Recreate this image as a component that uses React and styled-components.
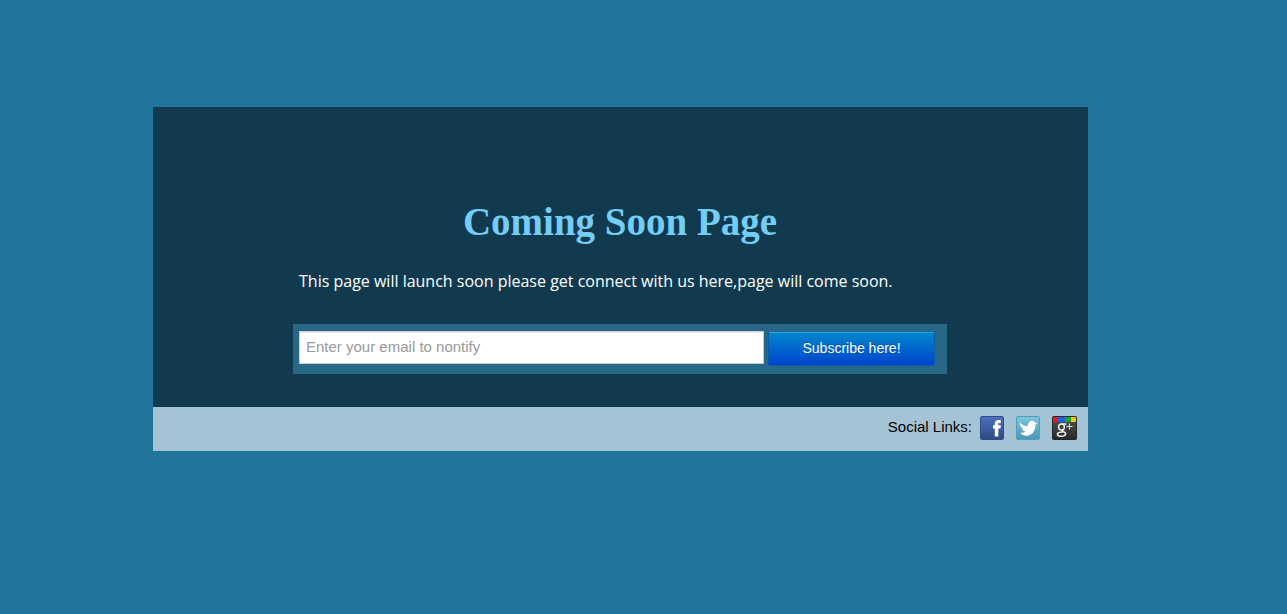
import React from "react";
import styled, { createGlobalStyle } from "styled-components";

const GlobalStyle = createGlobalStyle`
  *, *::before, *::after { box-sizing: border-box; }
  body { margin: 0; background: #21759b; font-family: "Liberation Sans", Arial, sans-serif; }
`;

const Page = styled.main`
  display: flex;
  justify-content: center;
  padding: 107px 46px 107px 0;
`;

const Card = styled.section`
  width: 100%;
  max-width: 935px;
`;

const Intro = styled.div`
  display: flex;
  flex-direction: column;
  align-items: center;
  padding: 90px 17px 33px 16px;
  background: #113a4e;
`;

const Title = styled.h1`
  margin: 0;
  color: #73cdf6;
  font: bold 39px/50px "Liberation Serif", "Times New Roman", serif;
  text-align: center;
`;

const Message = styled.p`
  width: 100%;
  max-width: 654px;
  margin: 24px 0 32px;
  padding: 0 6px;
  color: #fff;
  font: 16px/21px "Open Sans", Verdana, sans-serif;
`;

const SubscribeForm = styled.form`
  display: flex;
  gap: 4px;
  width: 100%;
  max-width: 654px;
  padding: 7px 12px 8px 6px;
  background: #296786;
`;

const EmailInput = styled.input`
  flex: 1;
  min-width: 0;
  height: 33px;
  padding: 0 6px 2px;
  border: 1px solid #ccc;
  background: #fff;
  color: #555;
  font: 15px/20px "Liberation Sans", Arial, sans-serif;
  box-shadow: inset 0 1px 1px rgba(0, 0, 0, 0.08);
  &::placeholder { color: #999; opacity: 1; }
`;

const SubscribeButton = styled.button`
  width: 167px;
  height: 35px;
  padding: 0 0 2px;
  border: 1px solid #0a5ca8;
  border-top-color: #176f9f;
  background: linear-gradient(#0088cc, #0044cc);
  color: #fff;
  font: 14px/20px "Liberation Sans", Arial, sans-serif;
  text-shadow: 0 -1px 0 rgba(0, 0, 0, 0.25);
  box-shadow: inset 0 1px 0 rgba(255, 255, 255, 0.2);
  cursor: pointer;
`;

const Footer = styled.footer`
  display: flex;
  align-items: center;
  justify-content: flex-end;
  gap: 8px;
  height: 44px;
  padding: 0 11px 2px;
  background: #a4c4d6;
`;

const FooterLabel = styled.span`
  padding-bottom: 2px;
  color: #000;
  font-size: 15px;
  line-height: 20px;
`;

const SocialLinks = styled.nav`
  display: flex;
  gap: 11px;
`;

const SocialLink = styled.a`
  display: block;
  height: 25px;
  svg { display: block; }
`;

function FacebookIcon() {
  return (
    <svg width="25" height="25" viewBox="0 0 25 25" aria-hidden="true">
      <defs>
        <linearGradient id="facebook" x2="0" y2="1">
          <stop stopColor="#4c70bb" />
          <stop offset="1" stopColor="#304a83" />
        </linearGradient>
      </defs>
      <rect x=".5" y=".5" width="23" height="23" rx="1.5" fill="url(#facebook)" stroke="#344d8a" />
      <path d="M14.8 20.5v-8H13V9.3h1.8V8c0-2.8 1.5-4.1 4.1-4.1h2v3.2h-1.1c-1.1 0-1.5.4-1.5 1.4v.8h2.6l-.4 3.2h-2.2v8z" fill="#fff" />
    </svg>
  );
}

function TwitterIcon() {
  return (
    <svg width="25" height="25" viewBox="0 0 25 25" aria-hidden="true">
      <defs>
        <linearGradient id="twitter" x2="0" y2="1">
          <stop stopColor="#80c5dc" />
          <stop offset="1" stopColor="#4697b9" />
        </linearGradient>
      </defs>
      <rect x=".5" y=".5" width="23" height="23" rx="1.5" fill="url(#twitter)" stroke="#559dbb" />
      <path d="M3.5 6.5c2.600 2.500 5 3.500 8 3.700C12 7.300 13.600 5 15.700 4.800c1.500-.1 2.500.5 3.300 1.700l2.600.5-2.200 1.600c.4 6.600-3.900 11.300-8.900 11.100-2.300-.1-4.900-1-6.300-2.900 2.100 0 4-.4 5.100-1.400-1.800-.3-2.900-1.100-3.400-2.400h1.500C5.300 11.600 4 9.800 3.500 6.500z" fill="#fff" />
    </svg>
  );
}

function GooglePlusIcon() {
  return (
    <svg width="25" height="25" viewBox="0 0 25 25" aria-hidden="true">
      <defs>
        <linearGradient id="google" x2="0" y2="1">
          <stop stopColor="#565656" />
          <stop offset="1" stopColor="#242424" />
        </linearGradient>
        <clipPath id="googleShape"><rect width="25" height="24" rx="2" /></clipPath>
      </defs>
      <g clipPath="url(#googleShape)">
        <rect width="25" height="25" fill="url(#google)" />
        <path d="M1 1h5v5H1z" fill="#f01414" />
        <path d="M6 1h7v5H6z" fill="#1764dd" />
        <path d="M13 1h6v5h-6z" fill="#1fa52b" />
        <path d="M19 1h5v5h-5z" fill="#ffc400" />
        <rect x=".5" y=".5" width="24" height="23" rx="1.5" fill="none" stroke="#252525" />
      </g>
      <g fill="none" stroke="#eee" strokeWidth="1.5">
        <ellipse cx="9.5" cy="11" rx="2.9" ry="3" />
        <path d="M9.500 8h5M11.500 13.500c-2 .9-1.500 1.400 0 2.200 3.500 1.600 2.500 4.500-2 4.600-4.800.1-5-2.900-2.200-3.900 1-.4 2.500-.4 3.500-.5" />
        <path d="M17.500 7.500v6M14.500 10.500h6" strokeWidth="1" />
      </g>
    </svg>
  );
}

const networks = [
  { name: "Facebook", Icon: FacebookIcon },
  { name: "Twitter", Icon: TwitterIcon },
  { name: "Google Plus", Icon: GooglePlusIcon },
];

export default function App() {
  return (
    <>
      <GlobalStyle />
      <Page>
        <Card>
          <Intro>
            <Title>Coming Soon Page</Title>
            <Message>This page will launch soon please get connect with us here,page will come soon.</Message>
            <SubscribeForm onSubmit={(event) => event.preventDefault()}>
              <EmailInput type="email" aria-label="Email" placeholder="Enter your email to nontify" />
              <SubscribeButton type="submit">Subscribe here!</SubscribeButton>
            </SubscribeForm>
          </Intro>
          <Footer>
            <FooterLabel>Social Links:</FooterLabel>
            <SocialLinks aria-label="Social links">
              {networks.map(({ name, Icon }) => (
                <SocialLink key={name} href="#" aria-label={name}>
                  <Icon />
                </SocialLink>
              ))}
            </SocialLinks>
          </Footer>
        </Card>
      </Page>
    </>
  );
}
